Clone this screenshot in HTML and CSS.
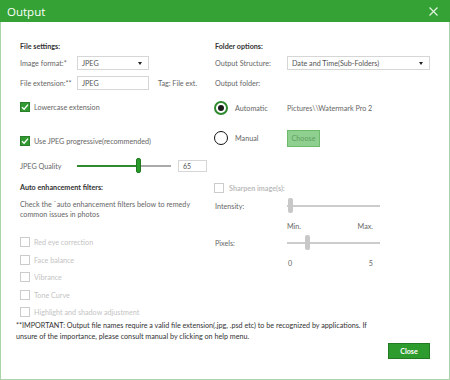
FILE: index.html
```html
<!DOCTYPE html>
<html>
<head>
<meta charset="utf-8">
<link rel="stylesheet" href="styles.css">
</head>
<body>
<div class="dialog">
  <div class="titlebar">
    <span class="title">Output</span>
    <svg class="x" width="9" height="9" viewBox="0 0 9 9"><path d="M0.5 0.5 L8.5 8.5 M8.5 0.5 L0.5 8.5" stroke="#dff3df" stroke-width="1.2"/></svg>
  </div>
  <div class="content">
    <div class="cols">
      <div class="col left">
        <div class="row r1"><span class="heading">File settings:</span></div>
        <div class="row r2"><span class="lbl">Image format:*</span><span class="field sel sel-s">JPEG<i class="arrow"></i></span></div>
        <div class="row r3"><span class="lbl">File extension:**</span><span class="field sel-s">JPEG</span><span class="tag">Tag: File ext.</span></div>
        <div class="row r4"><span class="cb on"><svg width="8" height="8" viewBox="0 0 8 8"><path d="M1 4.2 L3.1 6.2 L7 1.6" stroke="#fff" stroke-width="1.4" fill="none"/></svg></span><span class="cbl">Lowercase extension</span></div>
        <div class="row r5"><span class="cb on"><svg width="8" height="8" viewBox="0 0 8 8"><path d="M1 4.2 L3.1 6.2 L7 1.6" stroke="#fff" stroke-width="1.4" fill="none"/></svg></span><span class="cbl">Use JPEG progressive(recommended)</span></div>
        <div class="row r6"><span class="lbl">JPEG Quality</span>
          <span class="slider q"><span class="fill"></span><span class="thumb green"></span></span>
          <span class="field num">65</span></div>
        <div class="row r7"><span class="heading">Auto enhancement filters:</span></div>
        <div class="desc r8">Check the `auto enhancement filters below to remedy common issues in photos</div>
        <div class="row r9"><span class="cb off"></span><span class="cbl dis">Red eye correction</span></div>
        <div class="row r10"><span class="cb off"></span><span class="cbl dis">Face balance</span></div>
        <div class="row r11"><span class="cb off"></span><span class="cbl dis">Vibrance</span></div>
        <div class="row r12"><span class="cb off"></span><span class="cbl dis">Tone Curve</span></div>
        <div class="row r13"><span class="cb off"></span><span class="cbl dis">Highlight and shadow adjustment</span></div>
      </div>
      <div class="col right">
        <div class="row r1"><span class="heading">Folder options:</span></div>
        <div class="row s2"><span class="lbl2">Output Structure:</span><span class="field sel sel-l">Date and Time(Sub-Folders)<i class="arrow"></i></span></div>
        <div class="row s3"><span class="lbl2">Output folder:</span></div>
        <div class="row s4"><span class="radio on"><span class="dot"></span></span><span class="rlbl">Automatic</span><span class="path">Pictures\\Watermark Pro 2</span></div>
        <div class="row s5"><span class="radio"></span><span class="rlbl">Manual</span><span class="choose">Choose</span></div>
        <div class="row s6"><span class="cb off"></span><span class="heading dis">Sharpen image(s):</span></div>
        <div class="row s7"><span class="lbl2">Intensity:</span><span class="slider g"><span class="thumb grey t1"></span></span></div>
        <div class="row s8"><span class="ticks w1"><span>Min.</span><span>Max.</span></span></div>
        <div class="row s9"><span class="lbl2">Pixels:</span><span class="slider g"><span class="thumb grey t2"></span></span></div>
        <div class="row s10"><span class="ticks w2"><span>0</span><span>5</span></span></div>
      </div>
    </div>
    <p class="note">**IMPORTANT: Output file names require a valid file extension(.jpg, .psd etc) to be recognized by applications. If unsure of the importance, please consult manual by clicking on help menu.</p>
    <div class="footer"><span class="close">Close</span></div>
  </div>
</div>
</body>
</html>
```
FILE: styles.css
```css
* { box-sizing: border-box; }
html, body { margin: 0; padding: 0; background: #fff; }
body { font-family: "Lato", "Open Sans", sans-serif; font-size: 7.2px; color: #666; }
.dialog { width: 450px; height: 380px; border: 1px solid #a9d3a9; border-top: none; display: flex; flex-direction: column; }
.titlebar { height: 22px; background: #34a234; margin: 0 -1px; display: flex; align-items: center; justify-content: space-between; padding: 0 12px 0 7px; flex: none; }
.title { color: #fff; font-size: 11.5px; font-family: "Open Sans", sans-serif; }
.x { display: block; }
.content { padding: 16px 19px 0 19px; flex: 1; display: flex; flex-direction: column; }
.cols { display: flex; }
.col.left { width: 195px; flex: none; }
.col.right { flex: 1; min-width: 0; }
.row { height: 16px; display: flex; align-items: center; white-space: nowrap; }
.heading { font-weight: 700; color: #333; }
.heading.dis { color: #bbb; }
.lbl { width: 57px; flex: none; }
.lbl2 { width: 72px; flex: none; }
.field { height: 14px; border: 1px solid #d6d6d6; display: flex; align-items: center; padding-left: 4px; color: #555; position: relative; flex: none; }
.sel-s { width: 72px; }
.sel-l { width: 143px; }
.arrow { position: absolute; right: 6px; top: 5px; width: 0; height: 0; border-left: 2.5px solid transparent; border-right: 2.5px solid transparent; border-top: 3px solid #222; }
.tag { margin-left: 9px; }
.cb { width: 10px; height: 10px; border: 1px solid #ccc; display: flex; align-items: center; justify-content: center; flex: none; }
.cb.on { background: #2f9a2f; border-color: #2a7f2a; }
.cbl { margin-left: 4px; }
.dis { color: #c4c4c4; }
.r2 { margin-top: 1px; }
.r3 { margin-top: 4px; }
.r4 { margin-top: 8px; }
.r5 { margin-top: 18px; }
.r6 { margin-top: 9px; }
.r7 { margin-top: 5px; }
.desc { margin-top: 5px; line-height: 10px; height: 20px; width: 190px; }
.r9 { margin-top: 14px; }
.r10 { margin-top: 2px; }
.r11 { margin-top: 1px; }
.r12 { margin-top: 2px; }
.r13 { margin-top: 1px; }
.s2 { margin-top: 1px; }
.s3 { margin-top: 4px; }
.s4 { margin-top: 9px; }
.s5 { margin-top: 14px; }
.s6 { margin-top: 34px; margin-left: -1px; }
.s6 .heading { margin-left: 5px; }
.s7 { margin-top: 2px; }
.s8 { margin-top: 4px; }
.s9 { margin-top: 1px; }
.s10 { margin-top: 4px; }
.radio { width: 14px; height: 14px; border-radius: 50%; border: 1.5px solid #111; display: flex; align-items: center; justify-content: center; flex: none; margin-left: -1px; }
.radio.on { border: 2px solid #2f8a2f; }
.dot { width: 6px; height: 6px; border-radius: 50%; background: #1a1a1a; }
.rlbl { width: 52px; margin-left: 7px; flex: none; }
.path { color: #666; }
.choose { width: 33px; height: 17px; background: #8fcf8f; border: 1px solid #6dba6d; color: #5f9f5f; display: flex; align-items: center; justify-content: center; flex: none; }
.slider { position: relative; height: 16px; display: block; flex: none; }
.slider::before { content: ""; position: absolute; left: 0; right: 0; top: 7px; height: 1.5px; background: #aaa; }
.slider.q { width: 94px; }
.slider .fill { position: absolute; left: 0; top: 7px; height: 1.5px; width: 60px; background: #2f8a2f; }
.thumb { position: absolute; top: 0; width: 5px; height: 15px; border-radius: 2px; }
.thumb.green { left: 59px; background: #2a9a2a; border: 1px solid #1f7a1f; }
.slider.g { width: 93px; }
.slider.g::before { background: #ccc; }
.thumb.grey { background: #c8c8c8; }
.t1 { left: 1px; }
.t2 { left: 18px; }
.num { width: 29px; height: 12px; margin-left: 7px; font-size: 7px; }
.ticks { display: flex; justify-content: space-between; margin-left: 72px; color: #666; flex: none; }
.ticks.w1 { width: 86px; }
.ticks.w2 { width: 86px; padding-left: 1px; }
.note { margin: 0 0 0 -4px; line-height: 11px; color: #333; width: 372px; }
.footer { display: flex; justify-content: flex-end; margin-top: 1px; }
.close { width: 42px; height: 16px; background: #2e9b2e; border: 1px solid #237a23; color: #fff; font-weight: 700; display: flex; align-items: center; justify-content: center; }
```
